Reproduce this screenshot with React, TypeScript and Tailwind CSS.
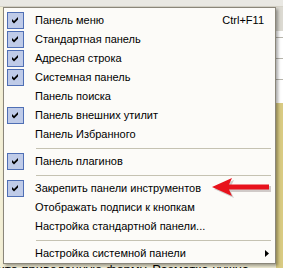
import React from 'react';

type Item =
  | { kind: 'item'; label: string; checked?: boolean; shortcut?: string; submenu?: boolean }
  | { kind: 'sep' };

const items: Item[] = [
  { kind: 'item', label: 'Панель меню', checked: true, shortcut: 'Ctrl+F11' },
  { kind: 'item', label: 'Стандартная панель', checked: true },
  { kind: 'item', label: 'Адресная строка', checked: true },
  { kind: 'item', label: 'Системная панель', checked: true },
  { kind: 'item', label: 'Панель поиска' },
  { kind: 'item', label: 'Панель внешних утилит', checked: true },
  { kind: 'item', label: 'Панель Избранного' },
  { kind: 'sep' },
  { kind: 'item', label: 'Панель плагинов', checked: true },
  { kind: 'sep' },
  { kind: 'item', label: 'Закрепить панели инструментов', checked: true },
  { kind: 'item', label: 'Отображать подписи к кнопкам' },
  { kind: 'item', label: 'Настройка стандартной панели...' },
  { kind: 'sep' },
  { kind: 'item', label: 'Настройка системной панели', submenu: true },
];

function CheckBox() {
  return (
    <div className="flex h-[17px] w-[17px] items-center justify-center border border-[#4f6fb5] bg-[#bfcbe8]">
      <svg width="7" height="7" viewBox="0 0 7 7">
        <polygon points="0,2 2,4 6,0 6,2.5 2,6.5 0,4.5" fill="#000" />
      </svg>
    </div>
  );
}

function MenuRow({ item }: { item: Extract<Item, { kind: 'item' }> }) {
  return (
    <div className="flex h-[19px] items-center pl-[3px]">
      <div className="w-[17px]">{item.checked && <CheckBox />}</div>
      <span className="ml-[11px]">{item.label}</span>
      {item.shortcut && <span className="ml-auto pr-[11px]">{item.shortcut}</span>}
      {item.submenu && (
        <svg className="ml-auto mr-[6px]" width="4" height="7" viewBox="0 0 4 7">
          <polygon points="0,0 4,3.5 0,7" fill="#000" />
        </svg>
      )}
    </div>
  );
}

export default function App() {
  return (
    <div className="relative h-[268px] w-[283px] overflow-hidden bg-[#f3efd6] font-['Liberation_Sans',Arial,sans-serif]">
      {/* window behind the menu */}
      <div className="h-[7px] border-b border-[#d6d3c8] bg-[#e9e8e3]" />
      <div className="absolute right-0 top-[7px] h-[24px] w-[7px] bg-[#dcdad2]" />
      <div className="absolute right-0 top-[31px] flex h-[72px] w-[7px] flex-col bg-white">
        <div className="mt-[6px] h-[1px] bg-[#b8b6ad]" />
        <div className="mt-[20px] h-[1px] bg-[#b8b6ad]" />
        <div className="mt-[20px] h-[1px] bg-[#b8b6ad]" />
      </div>
      <div className="absolute right-0 top-[103px] h-[165px] w-[7px] bg-[#d9cb83]" />
      <div className="absolute bottom-0 left-[-2px] translate-y-[9px] whitespace-nowrap text-[13px] leading-[15px] text-black">
        что приведенную форму. Разметка нужна
      </div>

      {/* popup menu */}
      <div className="absolute left-[3px] top-[7px] w-[273px] border border-[#8a867a] bg-[#fcfbf8] pt-[3px] text-[11px] text-black shadow-[2px_2px_3px_rgba(0,0,0,0.35)]">
        {items.map((item, i) =>
          item.kind === 'sep' ? (
            <div key={i} className="flex h-[8px] items-center">
              <div className="ml-[32px] mr-[4px] h-[1px] flex-1 bg-[#c5c2b2]" />
            </div>
          ) : (
            <MenuRow key={i} item={item} />
          )
        )}
      </div>

      {/* red pointer arrow */}
      <svg className="absolute left-[211px] top-[178px]" width="62" height="20" viewBox="0 0 62 20">
        <polygon points="2,10 22,1 19,7 59,7 59,13 19,13 22,19" fill="#6a5a5a" opacity="0.3" transform="translate(1,1)" />
        <polygon points="1,9 21,0 18,6.5 58,6.5 58,11.5 18,11.5 21,18" fill="#e8121c" />
      </svg>
    </div>
  );
}
